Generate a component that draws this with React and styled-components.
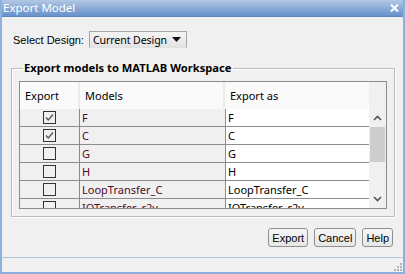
import React from 'react'
import styled, { createGlobalStyle } from 'styled-components'

const GlobalStyle = createGlobalStyle`
  html, body { margin: 0; padding: 0; background: #f0f0f0; }
  * { box-sizing: border-box; }
`

const rows = [
  { model: 'F', name: 'F', checked: true },
  { model: 'C', name: 'C', checked: true },
  { model: 'G', name: 'G', checked: false },
  { model: 'H', name: 'H', checked: false },
  { model: 'LoopTransfer_C', name: 'LoopTransfer_C', checked: false },
  { model: 'IOTransfer_r2y', name: 'IOTransfer_r2y', checked: false },
]

const CheckBox = ({ checked }) => (
  <Box>
    {checked && (
      <svg width="11" height="11" viewBox="0 0 11 11">
        <path d="M2 5.5 L4.3 8 L9 2.5" fill="none" stroke="#555" strokeWidth="1.3" />
      </svg>
    )}
  </Box>
)

const App = () => {
  return (
    <Window>
      <GlobalStyle />
      <TitleBar>
        <Title>Export Model</Title>
        <Close>
          <svg width="9" height="8" viewBox="0 0 9 8">
            <path d="M1 0.5 L8 7.5 M8 0.5 L1 7.5" stroke="#fff" strokeWidth="2" />
          </svg>
        </Close>
      </TitleBar>

      <Body>
        <DesignRow>
          <Label>Select Design:</Label>
          <Select>
            <span>Current Design</span>
            <svg width="9" height="5" viewBox="0 0 9 5">
              <path d="M0 0 L9 0 L4.5 5 Z" fill="#111" />
            </svg>
          </Select>
        </DesignRow>

        <Group>
          <Legend>Export models to MATLAB Workspace</Legend>
          <Table>
            <Grid>
              <HeadCell>Export</HeadCell>
              <HeadCell>Models</HeadCell>
              <HeadCell last>Export as</HeadCell>
              {rows.map((r) => (
                <React.Fragment key={r.model}>
                  <CheckCell><CheckBox checked={r.checked} /></CheckCell>
                  <ModelCell>{r.model}</ModelCell>
                  <NameCell>{r.name}</NameCell>
                </React.Fragment>
              ))}
            </Grid>
            <ScrollBar>
              <ScrollHead />
              <Arrow>
                <svg width="9" height="6" viewBox="0 0 9 6">
                  <path d="M1 5 L4.5 1.5 L8 5" fill="none" stroke="#555" strokeWidth="1.6" />
                </svg>
              </Arrow>
              <Track>
                <Thumb />
              </Track>
              <Arrow>
                <svg width="9" height="6" viewBox="0 0 9 6">
                  <path d="M1 1 L4.5 4.5 L8 1" fill="none" stroke="#555" strokeWidth="1.6" />
                </svg>
              </Arrow>
            </ScrollBar>
          </Table>
        </Group>

        <Buttons>
          <Button>Export</Button>
          <Button>Cancel</Button>
          <Button>Help</Button>
        </Buttons>
      </Body>

      <StatusBar>
        <Grip>
          <svg width="10" height="10" viewBox="0 0 10 10">
            <g fill="#a9b4bf">
              <rect x="8" y="2" width="2" height="2" />
              <rect x="5" y="5" width="2" height="2" />
              <rect x="8" y="5" width="2" height="2" />
              <rect x="2" y="8" width="2" height="2" />
              <rect x="5" y="8" width="2" height="2" />
              <rect x="8" y="8" width="2" height="2" />
            </g>
          </svg>
        </Grip>
      </StatusBar>
    </Window>
  )
}

const Window = styled.div`
  width: 405px;
  height: 274px;
  display: flex;
  flex-direction: column;
  background: #f0f0f0;
  border-left: 2px solid #8fb0db;
  border-right: 2px solid #8fb0db;
  border-bottom: 2px solid #8fb0db;
  font-family: 'Noto Sans', 'Liberation Sans', sans-serif;
  overflow: hidden;
`

const TitleBar = styled.div`
  height: 17px;
  flex: none;
  margin: 0 -2px;
  padding: 0 6px 0 3px;
  display: flex;
  align-items: center;
  justify-content: space-between;
  background: linear-gradient(#b2c8e4, #88a9d6 55%, #6692cd);
  border-bottom: 1px solid #5f86bd;
`

const Title = styled.div`
  color: #fff;
  font-size: 11.5px;
  line-height: 16px;
`

const Close = styled.div`
  display: flex;
  align-items: center;
`

const Body = styled.div`
  flex: 1;
  display: flex;
  flex-direction: column;
  padding: 14px 8px 0 9px;
`

const DesignRow = styled.div`
  display: flex;
  align-items: center;
  gap: 5px;
  padding-left: 2px;
`

const Label = styled.span`
  font-family: 'Liberation Sans', sans-serif;
  font-size: 11px;
  color: #000;
`

const Select = styled.div`
  width: 98px;
  height: 17px;
  display: flex;
  align-items: center;
  justify-content: space-between;
  padding: 0 5px 0 3px;
  font-size: 10.6px;
  letter-spacing: -0.1px;
  white-space: nowrap;
  color: #000;
  background: linear-gradient(#f4f4f4, #e4e4e4);
  border: 1px solid #a6a6a6;
  border-bottom-color: #e0e0e0;
`

const Group = styled.fieldset`
  margin: 13px 0 0 0;
  padding: 6px 7px 7px 7px;
  border: 1px solid #bcbcbc;
  box-shadow: 1px 1px 0 #fff, inset 1px 1px 0 #fff;
  min-width: 0;
`

const Legend = styled.legend`
  padding: 0 1px;
  margin-left: 4px;
  font-size: 11.2px;
  font-weight: 700;
  color: #000;
  line-height: 14px;
`

const Table = styled.div`
  display: flex;
  height: 128px;
  border: 1px solid #8c8c8c;
  background: #f0f0f0;
  overflow: hidden;
`

const Grid = styled.div`
  display: grid;
  grid-template-columns: 60px 145px 145px;
  grid-template-rows: 27px;
  grid-auto-rows: 18px;
  align-content: start;
  overflow: hidden;
`

const HeadCell = styled.div`
  display: flex;
  align-items: center;
  padding-left: 5px;
  font-size: 11px;
  color: #000;
  background: #fafafa;
  border-right: ${(p) => (p.last ? 'none' : '2px solid #ebebeb')};
`

const CheckCell = styled.div`
  display: flex;
  align-items: center;
  justify-content: center;
  border-bottom: 1px solid #8c8c8c;
  border-right: 1px solid #8c8c8c;
`

const ModelCell = styled.div`
  display: flex;
  align-items: center;
  padding-left: 2px;
  font-size: 11px;
  color: #4e0a28;
  border-bottom: 1px solid #8c8c8c;
  white-space: nowrap;
  overflow: hidden;
`

const NameCell = styled.div`
  display: flex;
  align-items: center;
  padding-left: 2px;
  font-size: 11px;
  color: #000;
  background: #fff;
  border-bottom: 1px solid #8c8c8c;
  border-left: 1px solid #8c8c8c;
  border-right: 1px solid #8c8c8c;
  white-space: nowrap;
  overflow: hidden;
`

const Box = styled.div`
  width: 13px;
  height: 13px;
  border: 1px solid #333;
  display: flex;
  align-items: center;
  justify-content: center;
`

const ScrollBar = styled.div`
  width: 17px;
  display: flex;
  flex-direction: column;
  background: #f0f0f0;
`

const ScrollHead = styled.div`
  height: 27px;
  flex: none;
`

const Arrow = styled.div`
  height: 18px;
  flex: none;
  display: flex;
  align-items: center;
  justify-content: center;
`

const Track = styled.div`
  flex: 1;
  padding: 0 1px;
`

const Thumb = styled.div`
  height: 35px;
  background: #cdcdcd;
`

const Buttons = styled.div`
  display: flex;
  justify-content: flex-end;
  gap: 6px;
  margin-top: 11px;
  padding-right: 2px;
`

const Button = styled.button`
  height: 19px;
  padding: 0 3px;
  font-family: 'Liberation Sans', sans-serif;
  font-size: 11px;
  color: #000;
  background: linear-gradient(#f6f6f6, #e6e6e6);
  border: 1px solid #8e8f8f;
  border-radius: 3px;
`

const StatusBar = styled.div`
  height: 15px;
  flex: none;
  display: flex;
  justify-content: flex-end;
  align-items: flex-end;
  border-top: 1px solid #b7c7d9;
  background: #f0f0f0;
`

const Grip = styled.div`
  display: flex;
  padding: 0 1px 1px 0;
`

export default App
